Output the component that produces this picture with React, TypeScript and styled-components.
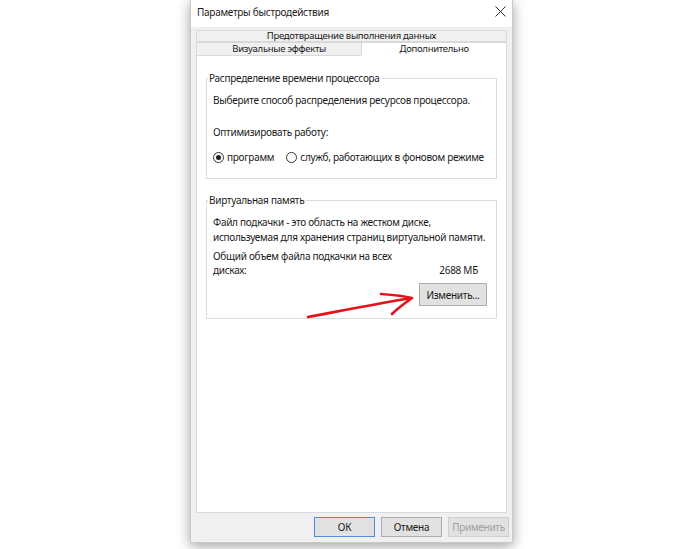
import React from "react";
import styled, { createGlobalStyle } from "styled-components";

const GlobalStyle = createGlobalStyle`
  html, body { margin: 0; padding: 0; background: #ffffff; }
  body { font-family: "Noto Sans", "Open Sans", Arial, sans-serif; }
`;

const Page = styled.div`
  position: relative;
  width: 699px;
  height: 549px;
  display: flex;
  align-items: flex-start;
  padding-left: 190px;
  box-sizing: border-box;
  overflow: hidden;
`;

const Window = styled.div`
  width: 323px;
  height: 543px;
  display: flex;
  flex-direction: column;
  background: #f0f0f0;
  border: 1px solid #c9c9c9;
  border-top: none;
  box-sizing: border-box;
  box-shadow: 0 3px 12px rgba(0, 0, 0, 0.38);
  font-size: 10px;
  color: #1a1a1a;
  letter-spacing: -0.28px;
`;

const TitleBar = styled.div`
  height: 27px;
  flex: none;
  background: #ffffff;
  display: flex;
  align-items: flex-start;
  justify-content: space-between;
  padding: 5px 6px 0 6px;
  box-sizing: border-box;
  font-size: 10px;
  line-height: 14px;
  color: #222;
`;

const CloseGlyph = styled.svg`
  width: 11px;
  height: 11px;
  margin-top: 1px;
`;

const Body = styled.div`
  flex: 1;
  display: flex;
  flex-direction: column;
  padding: 3px 5px 0 5px;
  min-height: 0;
`;

const TabRow = styled.div<{ $h: number }>`
  display: flex;
  height: ${(p) => p.$h}px;
  line-height: 12px;
  font-size: 9.5px;
`;

const Tab = styled.div<{ $active?: boolean; $grow: number }>`
  flex: ${(p) => p.$grow} 1 0;
  display: flex;
  align-items: center;
  justify-content: center;
  box-sizing: border-box;
  background: ${(p) => (p.$active ? "#ffffff" : "#f0f0f0")};
  border: 1px solid #d9d9d9;
  border-bottom: ${(p) => (p.$active ? "none" : "1px solid #d9d9d9")};
  margin-left: -1px;
  &:first-child { margin-left: 0; }
  padding-bottom: ${(p) => (p.$active ? 2 : 0)}px;
`;

const Panel = styled.div`
  flex: 1;
  background: #ffffff;
  border: 1px solid #d9d9d9;
  border-top: none;
  padding: 16px 9px 0 9px;
  display: flex;
  flex-direction: column;
  gap: 15px;
`;

const Group = styled.fieldset<{ $h: number }>`
  margin: 0;
  height: ${(p) => p.$h}px;
  box-sizing: border-box;
  border: 1px solid #dcdcdc;
  padding: 0 9px 0 6px;
  display: flex;
  flex-direction: column;
  min-width: 0;
`;

const Legend = styled.legend`
  padding: 0 1px;
  margin-left: -5px;
  line-height: 12px;
`;

const Line = styled.div<{ $mt?: number }>`
  margin-top: ${(p) => p.$mt ?? 0}px;
  line-height: 15px;
  white-space: nowrap;
`;

const RadioRow = styled.div`
  display: flex;
  align-items: center;
  margin-top: 10px;
  line-height: 15px;
  gap: 3px;
  white-space: nowrap;
`;

const Radio = styled.span<{ $on?: boolean }>`
  width: 11px;
  height: 11px;
  flex: none;
  border-radius: 50%;
  border: 1px solid #333;
  box-sizing: border-box;
  display: inline-flex;
  align-items: center;
  justify-content: center;
  margin-left: ${(p) => (p.$on ? 0 : 9)}px;
  &::after {
    content: "";
    width: 5px;
    height: 5px;
    border-radius: 50%;
    background: ${(p) => (p.$on ? "#222" : "transparent")};
  }
`;

const SizeRow = styled.div`
  display: flex;
  justify-content: space-between;
  align-items: flex-end;
  padding-right: 9px;
  line-height: 13px;
`;

const ButtonRow = styled.div`
  display: flex;
  justify-content: flex-end;
  margin-top: 6px;
`;

const Button = styled.button<{ $primary?: boolean; $w: number; $h: number }>`
  width: ${(p) => p.$w}px;
  height: ${(p) => p.$h}px;
  font-family: inherit;
  font-size: 10px;
  letter-spacing: -0.28px;
  background: #e1e1e1;
  color: ${(p) => (p.disabled ? "#a0a0a0" : "#1a1a1a")};
  border: 1px solid ${(p) => (p.$primary ? "#4a8fd9" : p.disabled ? "#cfcfcf" : "#adadad")};
  padding: 0;
`;

const Footer = styled.div`
  height: 29px;
  flex: none;
  display: flex;
  justify-content: flex-end;
  align-items: center;
  gap: 6px;
  padding: 0 3px 2px 0;
  box-sizing: border-box;
`;

const ArrowLayer = styled.svg`
  position: absolute;
  left: 0;
  top: 0;
  width: 699px;
  height: 549px;
  pointer-events: none;
`;

export default function App() {
  return (
    <>
      <GlobalStyle />
      <Page>
        <Window>
          <TitleBar>
            <span>Параметры быстродействия</span>
            <CloseGlyph viewBox="0 0 11 11">
              <path d="M0.5 0.5 L10.5 10.5 M10.5 0.5 L0.5 10.5" stroke="#333" strokeWidth="1" />
            </CloseGlyph>
          </TitleBar>
          <Body>
            <TabRow $h={12}>
              <Tab $grow={1}>Предотвращение выполнения данных</Tab>
            </TabRow>
            <TabRow $h={14}>
              <Tab $grow={166}>Визуальные эффекты</Tab>
              <Tab $grow={145} $active>Дополнительно</Tab>
            </TabRow>
            <Panel>
              <Group $h={107}>
                <Legend>Распределение времени процессора</Legend>
                <Line $mt={9}>Выберите способ распределения ресурсов процессора.</Line>
                <Line $mt={17}>Оптимизировать работу:</Line>
                <RadioRow>
                  <Radio $on />
                  <span>программ</span>
                  <Radio />
                  <span>служб, работающих в фоновом режиме</span>
                </RadioRow>
              </Group>
              <Group $h={125}>
                <Legend>Виртуальная память</Legend>
                <Line $mt={9}>Файл подкачки - это область на жестком диске,</Line>
                <Line>используемая для хранения страниц виртуальной памяти.</Line>
                <Line $mt={4}>Общий объем файла подкачки на всех</Line>
                <SizeRow>
                  <span>дисках:</span>
                  <span>2688 МБ</span>
                </SizeRow>
                <ButtonRow>
                  <Button $w={68} $h={23}>Изменить...</Button>
                </ButtonRow>
              </Group>
            </Panel>
          </Body>
          <Footer>
            <Button $primary $w={61} $h={20}>ОК</Button>
            <Button $w={61} $h={20}>Отмена</Button>
            <Button $w={61} $h={20} disabled>Применить</Button>
          </Footer>
        </Window>
        <ArrowLayer viewBox="0 0 699 549">
          <path
            d="M308 317 C 340 311, 380 303, 412 298 M381 294 C 394 295, 404 296, 412 298 C 405 303, 398 308, 392 314"
            fill="none"
            stroke="#e3131b"
            strokeWidth="2.7"
            strokeLinecap="round"
            strokeLinejoin="round"
          />
        </ArrowLayer>
      </Page>
    </>
  );
}
